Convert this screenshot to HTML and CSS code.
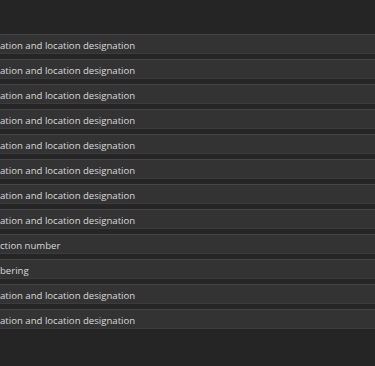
FILE: index.html
```html
<!DOCTYPE html>
<html lang="en">
<head>
<meta charset="UTF-8">
<meta name="viewport" content="width=device-width, initial-scale=1.0">
<title>Designations</title>
<link rel="stylesheet" href="styles.css">
</head>
<body>
<div class="list">
  <div class="row"><span class="label">ation and location designation</span></div>
  <div class="row"><span class="label">ation and location designation</span></div>
  <div class="row"><span class="label">ation and location designation</span></div>
  <div class="row"><span class="label">ation and location designation</span></div>
  <div class="row"><span class="label">ation and location designation</span></div>
  <div class="row"><span class="label">ation and location designation</span></div>
  <div class="row"><span class="label">ation and location designation</span></div>
  <div class="row"><span class="label">ation and location designation</span></div>
  <div class="row"><span class="label">ction number</span></div>
  <div class="row"><span class="label">bering</span></div>
  <div class="row"><span class="label">ation and location designation</span></div>
  <div class="row"><span class="label">ation and location designation</span></div>
</div>
</body>
</html>
```

FILE: styles.css
```css
html, body {
  margin: 0;
  height: 100%;
  background-color: #252525;
}
body {
  font-family: "Open Sans", "Noto Sans", sans-serif;
  font-size: 9.6px;
  color: #dadada;
  overflow: hidden;
}
.list {
  display: flex;
  flex-direction: column;
  gap: 5px;
  padding-top: 34px;
}
.row {
  height: 18px;
  display: flex;
  align-items: center;
  background-color: #333333;
  border-top: 1px solid #454545;
  border-bottom: 1px solid #3c3c3c;
  overflow: hidden;
  white-space: nowrap;
}
.label {
  display: block;
  padding-top: 3px;
}
```
